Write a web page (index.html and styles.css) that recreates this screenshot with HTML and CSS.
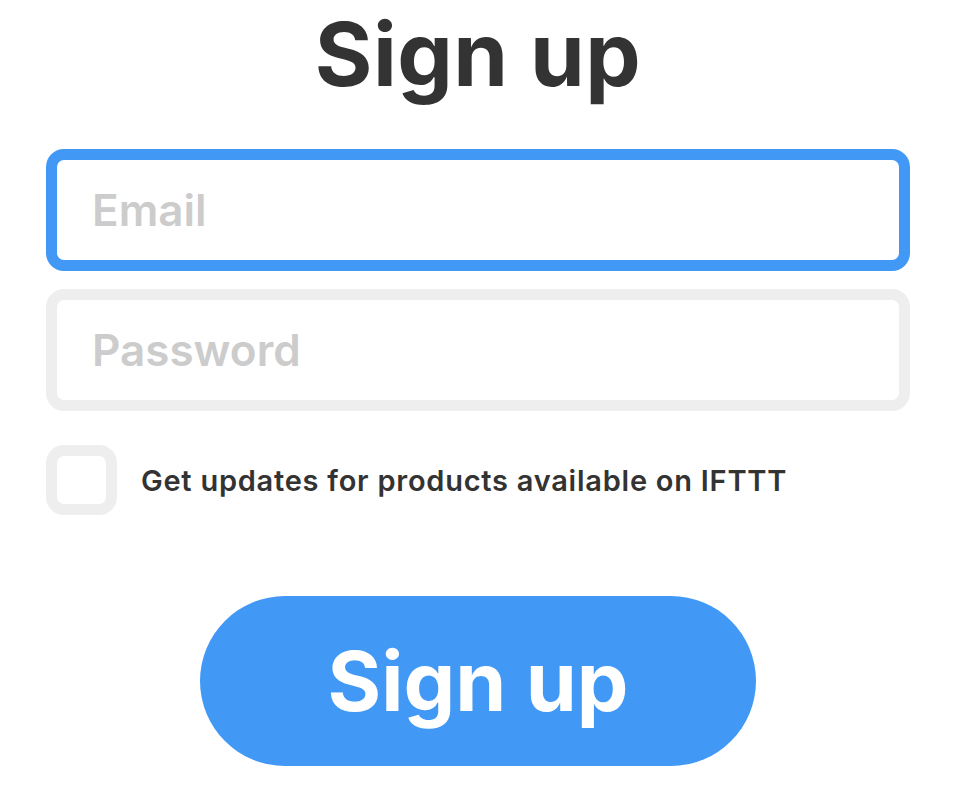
FILE: index.html
```html
<!DOCTYPE html>
<html lang="en">
<head>
    <meta charset="UTF-8">
    <meta name="viewport" content="width=device-width, initial-scale=1.0">
    <title>Sign up</title>
    <link rel="stylesheet" href="styles.css">
</head>
<body>
    <!-- Sign up form -->
    <main class="signup">
        <h1 class="signup-title">Sign up</h1>

        <form class="signup-form">
            <input type="email" class="field is-focused" placeholder="Email">
            <input type="password" class="field" placeholder="Password">

            <label class="opt-in">
                <span class="opt-in-box"></span>
                <span class="opt-in-text">Get updates for products available on IFTTT</span>
            </label>

            <button type="button" class="signup-button">Sign up</button>
        </form>
    </main>
</body>
</html>
```

FILE: styles.css
```css
/* General styling */
body {
    font-family: 'Inter', 'Lato', sans-serif;
    background-color: #ffffff;
    color: #333333;
    margin: 0;
    padding: 0;
}

.signup {
    width: 864px;
    padding-left: 46px;
    text-align: center;
}

.signup-title {
    font-size: 88px;
    font-weight: 700;
    line-height: 100px;
    letter-spacing: 0.5px;
    margin: 4px 0 45px;
    color: #333333;
}

/* Form */
.signup-form {
    display: flex;
    flex-direction: column;
    align-items: stretch;
    gap: 18px;
}

.field {
    box-sizing: border-box;
    height: 122px;
    width: 100%;
    padding: 0 35px;
    border: 11px solid #eeeeee;
    border-radius: 18px;
    background-color: #ffffff;
    font-family: inherit;
    font-size: 44px;
    font-weight: 600;
    color: #333333;
    outline: none;
}

.field::placeholder {
    color: #cccccc;
}

.field.is-focused {
    border-color: #4299f5;
}

/* Opt-in checkbox */
.opt-in {
    display: flex;
    align-items: center;
    gap: 24px;
    margin-top: 16px;
    text-align: left;
}

.opt-in-box {
    box-sizing: border-box;
    width: 71px;
    height: 70px;
    border: 11px solid #eeeeee;
    border-radius: 18px;
    flex-shrink: 0;
}

.opt-in-text {
    font-size: 29px;
    font-weight: 600;
    letter-spacing: 0.75px;
    color: #333333;
}

/* Button */
.signup-button {
    align-self: center;
    width: 556px;
    height: 170px;
    margin-top: 63px;
    background-color: #4299f5;
    color: #ffffff;
    border: none;
    border-radius: 85px;
    font-family: inherit;
    font-size: 82px;
    font-weight: 700;
    cursor: pointer;
}
```
